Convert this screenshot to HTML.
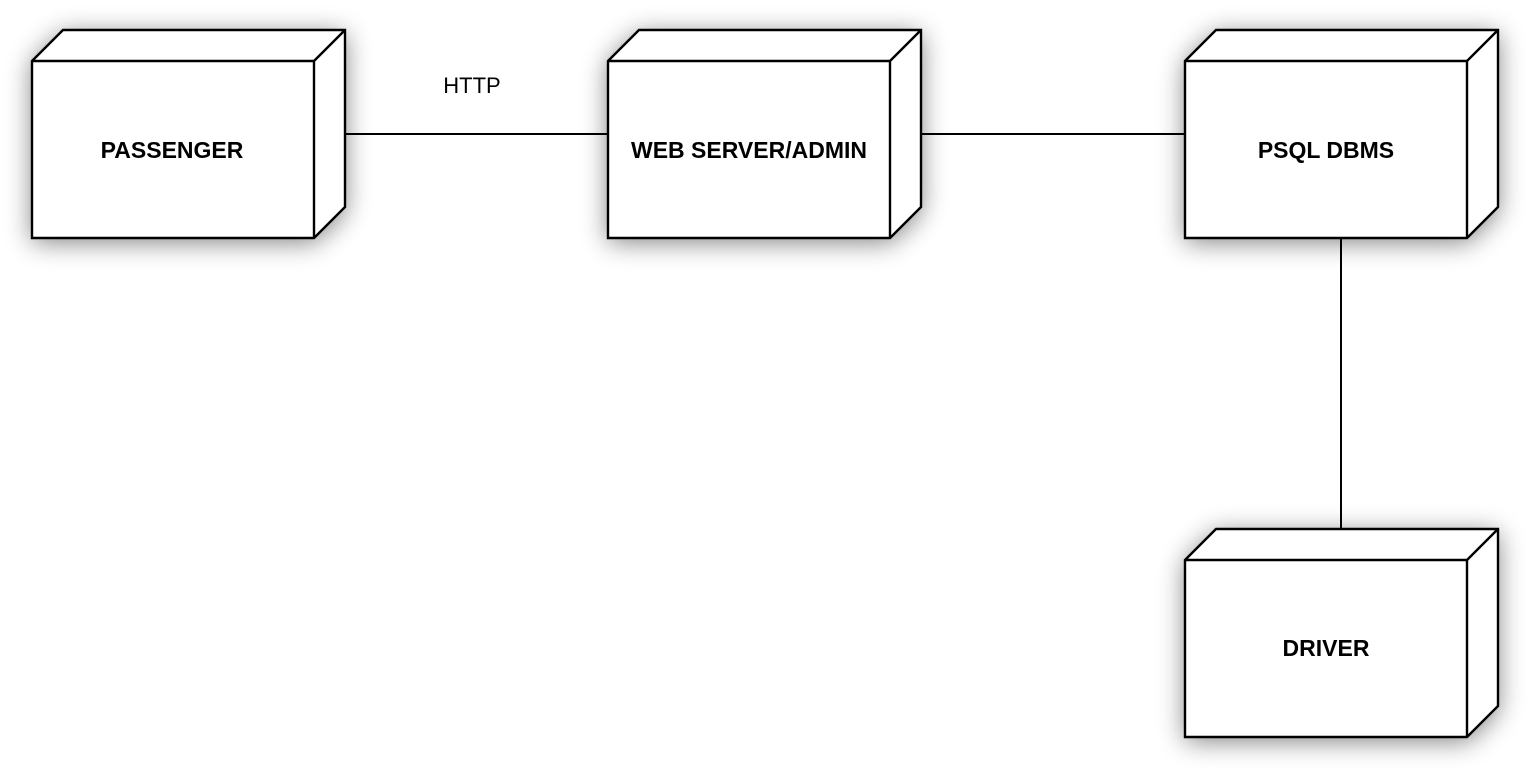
<!DOCTYPE html>
<html><head><style>html,body{margin:0;padding:0;background:#fff;}svg{display:block}</style></head>
<body>
<svg width="1531" height="768" viewBox="0 0 1531 768" xmlns="http://www.w3.org/2000/svg">
<defs>
<filter id="sh" x="-30%" y="-40%" width="160%" height="180%">
<feGaussianBlur in="SourceAlpha" stdDeviation="13"/>
<feOffset dx="0" dy="4" result="b"/>
<feComponentTransfer><feFuncA type="linear" slope="0.5"/></feComponentTransfer>
<feMerge><feMergeNode/><feMergeNode in="SourceGraphic"/></feMerge>
</filter>
<g id="node">
<path d="M0 31 L31 0 L313 0 L313 177 L282 208 L0 208 Z" fill="#fff" filter="url(#sh)"/>
<path d="M0 31 L31 0 L313 0 L313 177 L282 208 L0 208 Z M0 31 L282 31 L282 208 M282 31 L313 0" fill="none" stroke="#000" stroke-width="2.4" stroke-linejoin="miter"/>
</g>
</defs>
<g stroke="#000" stroke-width="2">
<line x1="345" y1="134" x2="609" y2="134"/>
<line x1="920" y1="134" x2="1185" y2="134"/>
<line x1="1341" y1="239" x2="1341" y2="529"/>
</g>
<use href="#node" x="32" y="30"/>
<use href="#node" x="608" y="30"/>
<use href="#node" x="1185" y="30"/>
<use href="#node" x="1185" y="529"/>
<g font-family="Liberation Sans, sans-serif" font-weight="bold" font-size="23" text-anchor="middle" fill="#000">
<text x="172" y="158">PASSENGER</text>
<text x="749" y="158">WEB SERVER/ADMIN</text>
<text x="1326" y="158">PSQL DBMS</text>
<text x="1326" y="656">DRIVER</text>
</g>
<text x="472" y="93" font-family="Liberation Sans, sans-serif" font-size="22" text-anchor="middle">HTTP</text>
</svg>
</body></html>
